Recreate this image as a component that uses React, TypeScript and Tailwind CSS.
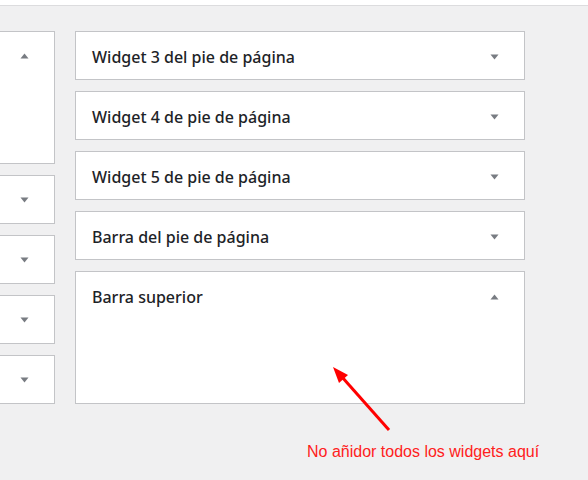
import React from "react";

function Tri({ up = false }: { up?: boolean }) {
  return (
    <svg width="9" height="6" viewBox="0 0 9 6" className="shrink-0">
      {up ? <polygon points="0.5,5.5 8.5,5.5 4.5,0.5" fill="#787c82" /> : <polygon points="0.5,0.5 8.5,0.5 4.5,5.5" fill="#787c82" />}
    </svg>
  );
}

function LeftCard({ tall = false, up = false }: { tall?: boolean; up?: boolean }) {
  return (
    <div className={`bg-white border-y border-r border-[#c3c4c7] ${tall ? "h-[133px]" : "h-[49px]"} flex justify-end pr-[25px] ${tall ? "items-start pt-[21px]" : "items-center"}`}>
      <Tri up={up} />
    </div>
  );
}

function RightCard({ title, tall = false, up = false }: { title: string; tall?: boolean; up?: boolean }) {
  return (
    <div className={`bg-white border border-[#c3c4c7] ${tall ? "h-[133px]" : "h-[49px]"}`}>
      <div className="h-[49px] flex items-center justify-between pl-[16px] pr-[25px]">
        <span className="text-[16px] font-medium text-[#1d2327] leading-[20px]" style={{ fontFamily: '"Noto Sans", sans-serif' }}>{title}</span>
        <Tri up={up} />
      </div>
    </div>
  );
}

export default function App() {
  return (
    <div className="relative w-[588px] h-[480px] bg-[#f0f0f1] overflow-hidden">
      <div className="h-[6px] bg-white border-b border-[#dcdcde]" />
      <div className="flex pt-[25px] gap-[20px]">
        <div className="w-[55px] flex flex-col gap-[11px]">
          <LeftCard tall up />
          <LeftCard />
          <LeftCard />
          <LeftCard />
          <LeftCard />
        </div>
        <div className="w-[450px] flex flex-col">
          <div className="flex flex-col gap-[11px]">
            <RightCard title="Widget 3 del pie de página" />
            <RightCard title="Widget 4 de pie de página" />
            <RightCard title="Widget 5 de pie de página" />
            <RightCard title="Barra del pie de página" />
            <RightCard title="Barra superior" tall up />
          </div>
          <p className="mt-[39px] pl-[232px] text-[16px] text-[#ff2020] leading-[18px] whitespace-nowrap" style={{ fontFamily: '"Liberation Sans", Arial, sans-serif' }}>
            No añidor todos los widgets aquí
          </p>
        </div>
      </div>
      <svg className="absolute left-0 top-0 pointer-events-none" width="588" height="480">
        <line x1="389" y1="430" x2="342" y2="377" stroke="#ff0000" strokeWidth="3" />
        <polygon points="333,367 348,375 339,383" fill="#ff0000" />
      </svg>
    </div>
  );
}
